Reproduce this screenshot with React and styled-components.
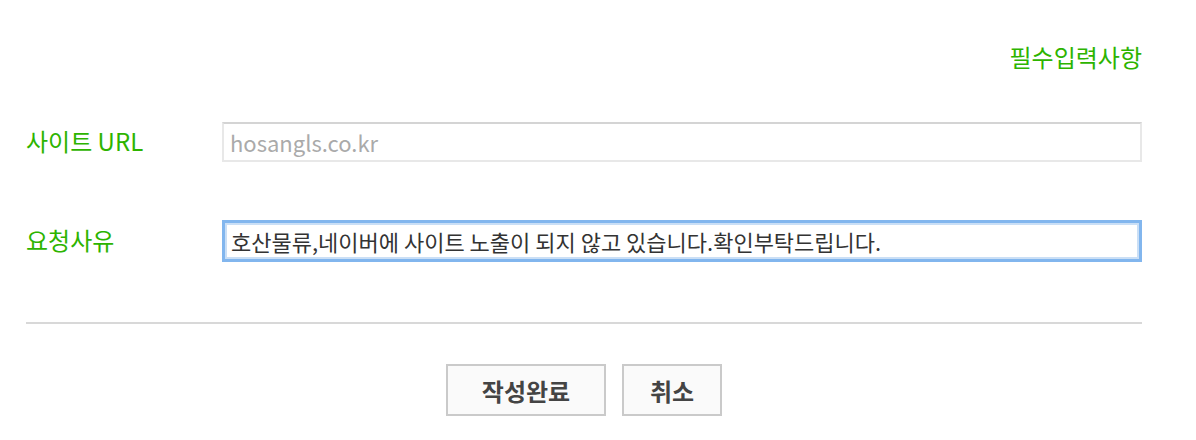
import React from "react";
import styled, { createGlobalStyle } from "styled-components";

const Global = createGlobalStyle`
  html, body { margin: 0; padding: 0; background: #fff; }
  body { font-family: "Noto Sans CJK KR", "Noto Sans", sans-serif; }
`;

const Page = styled.div`
  width: 1116px;
  padding: 0 54px 0 26px;
`;

const Header = styled.div`
  display: flex;
  justify-content: flex-end;
  margin-top: 42px;
  height: 30px;
  line-height: 30px;
  font-size: 24px;
  color: #2db400;
`;

const Row = styled.div`
  display: flex;
  align-items: center;
  margin-top: ${(p) => p.$top}px;
  height: ${(p) => p.$h}px;
`;

const Label = styled.label`
  width: 196px;
  flex: none;
  font-size: 24px;
  line-height: 30px;
  color: #2db400;
  margin-top: -3px;
`;

const Field = styled.input`
  flex: 1;
  box-sizing: border-box;
  height: 100%;
  margin: 0;
  padding: 0 6px;
  font-family: inherit;
  font-size: 22px;
  outline: none;
  background: #fff;
  color: ${(p) => (p.$focused ? "#333" : "#aaa")};
  border: ${(p) => (p.$focused ? "3px solid #82b6ee" : "2px solid #e8e8e8")};
  border-top-color: ${(p) => (p.$focused ? "#82b6ee" : "#d4d4d4")};
  box-shadow: ${(p) => (p.$focused ? "inset 0 0 0 2px #cadff6" : "none")};
`;

const Divider = styled.hr`
  margin: 60px 0 0;
  border: none;
  height: 2px;
  background: #d8d8d8;
`;

const Actions = styled.div`
  display: flex;
  justify-content: center;
  gap: 16px;
  margin-top: 40px;
`;

const Button = styled.button`
  box-sizing: border-box;
  width: ${(p) => p.$w}px;
  height: 52px;
  background: #fafafa;
  border: 2px solid #cacaca;
  font-family: inherit;
  font-size: 24px;
  font-weight: 700;
  color: #444;
  padding: 0;
  cursor: pointer;
`;

export default function App() {
  return (
    <Page>
      <Global />
      <Header>필수입력사항</Header>
      <Row $top={50} $h={40}>
        <Label>사이트 URL</Label>
        <Field defaultValue="hosangls.co.kr" readOnly />
      </Row>
      <Row $top={58} $h={42}>
        <Label>요청사유</Label>
        <Field
          $focused
          defaultValue="호산물류,네이버에 사이트 노출이 되지 않고 있습니다.확인부탁드립니다."
        />
      </Row>
      <Divider />
      <Actions>
        <Button $w={160}>작성완료</Button>
        <Button $w={100}>취소</Button>
      </Actions>
    </Page>
  );
}
